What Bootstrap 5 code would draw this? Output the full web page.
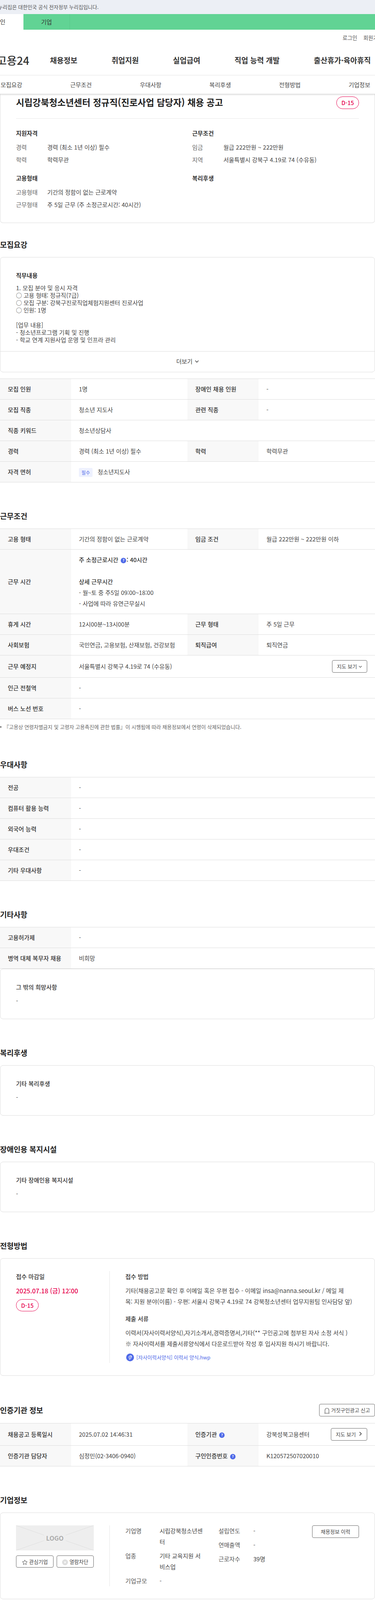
<!DOCTYPE html>
<html lang="ko">
<head>
  <meta charset="UTF-8" />
  <meta name="viewport" content="width=device-width, initial-scale=1.0"/>
  <title>고용24 | 채용 공고</title>
  <link href="https://cdn.jsdelivr.net/npm/bootstrap@5.3.0/dist/css/bootstrap.min.css" rel="stylesheet"/>
  <script src="https://cdn.jsdelivr.net/npm/bootstrap@5.3.0/dist/js/bootstrap.bundle.min.js"></script>
  <style>
    html, body { overflow-x: hidden; }
    body {
      font-family: "Noto Sans CJK KR", "Noto Sans", sans-serif;
      font-size: 15px;
      line-height: 28px;
      color: #444;
      background: #fff;
    }
    .gov-bar { height: 36px; background: #eceff5; font-size: 13px; line-height: 36px; color: #555; white-space: nowrap; }
    .gov-bar span { margin-left: -5px; display: inline-block; }
    .type-bar { height: 40px; background: #61d394; color: #333; line-height: 40px; }
    .type-on { width: 60px; background: #fff; }
    .type-off { width: 119px; text-align: center; border-right: 1px solid #58c788; }
    .util-row { height: 40px; font-size: 13.5px; line-height: 40px; color: #555; gap: 16px; margin-right: -20px; }
    .main-nav { height: 77px; border-bottom: 1px solid #e5e5e5; align-items: center; gap: 87.5px; white-space: nowrap; }
    .site-logo { font-size: 28px; font-weight: 500; color: #333; margin-left: -8.5px; margin-right: -34.5px; line-height: 76px; }
    .main-link { font-size: 19px; font-weight: 600; color: #333; }
    .sub-nav { position: relative; z-index: 2; height: 48px; line-height: 48px; background: #fff; border-bottom: 1px solid #ddd; box-shadow: 0 2px 3px rgba(0,0,0,.12); }
    .sub-inner { margin-left: -60px; width: 1069.2px; }
    .sub-inner > span { flex: 1 1 0; text-align: center; color: #444; }
    .box { border: 1px solid #ddd; border-radius: 8px; background: #fff; }
    .summary-box { border-top: 0; border-top-left-radius: 0; border-top-right-radius: 0; padding: 6px 40px 32px; }
    .job-title { font-size: 23px; font-weight: 600; color: #222; line-height: 28px; margin: 0; }
    .dday { display: inline-block; width: 58px; height: 32px; line-height: 30px; border: 1px solid #e6004d; border-radius: 16px; color: #e6004d; text-align: center; font-size: 14.5px; font-weight: 500; }
    .summary-head { padding-bottom: 24px; border-bottom: 1px solid #e8e8e8; margin-bottom: 23px; }
    .sum-left { width: 451px; }
    .sum-h { font-weight: 600; color: #333; margin-bottom: 8px; }
    .sum-row { display: flex; margin-bottom: 4px; }
    .sum-row b { width: 80px; flex: none; font-weight: 400; color: #666; }
    .sum-group { margin-bottom: 19px; }
    .sum-group:last-child { margin-bottom: -4px; }
    .sec { margin-top: 72px; }
    .sec-first { margin-top: 41px; }
    .sec-title { font-size: 19px; font-weight: 600; color: #222; line-height: 28px; margin: 0 0 18px; }
    .duty { padding: 32px 40px 20px; line-height: 19px; }
    .duty-h { line-height: 28px; font-weight: 600; color: #333; margin-bottom: 8px; }
    .duty-text { white-space: pre-line; }
    .more-row { height: 53px; line-height: 50px; border-top: 1px solid #ddd; text-align: center; color: #444; }
    .more-row svg { margin-left: 6px; vertical-align: 2px; }
    .tbl { table-layout: fixed; width: 100%; margin: 0; border-top: 1px solid #ddd; }
    .tbl td, .tbl th { padding: 12px 20px; line-height: 28px; border-bottom: 1px solid #ddd; color: #444; font-weight: 400; vertical-align: middle; }
    .tbl th { background: #f8f8f8; font-weight: 500; color: #333; }
    .col-h { width: 182px; }
    .col-v { width: 298px; }
    .gap-top { margin-top: 16px; }
    .chip { display: inline-block; width: 35px; height: 23px; line-height: 23px; text-align: center; font-size: 12px; background: #eef1fe; color: #5a74ec; border-radius: 3px; margin-right: 13px; vertical-align: middle; }
    .hint { display: inline-block; width: 14px; height: 14px; line-height: 14px; border-radius: 50%; background: #4f6ae8; color: #fff; font-size: 9px; font-weight: 700; text-align: center; vertical-align: 1px; margin: 0 1px 0 2px; }
    .fw-mid { font-weight: 500; color: #333; }
    .map-btn { height: 32px; padding: 0 12px; font-size: 13px; line-height: 30px; border: 1px solid #666; border-radius: 4px; background: #fff; color: #444; white-space: nowrap; }
    .map-btn svg { margin-left: 4px; vertical-align: 1px; }
    .note-line { font-size: 13px; color: #666; line-height: 20px; margin-top: 10px; white-space: nowrap; }
    .note-line::before { content: ""; display: inline-block; width: 4px; height: 4px; border-radius: 50%; background: #777; margin: 0 6px 2px 0; vertical-align: middle; }
    .plain-box { padding: 32px 40px; margin: 0; }
    .plain-box div:first-child { color: #333; margin-bottom: 7px; font-weight: 500; }
    .apply-box { padding: 32px 40px; display: flex; }
    .left-col { width: 240px; flex: none; border-right: 1px solid #e5e5e5; }
    .left-logo { padding-right: 40px; height: 156px; }
    .right-col { flex: 1; padding-left: 40px; min-width: 0; }
    .deadline { color: #e6004d; font-size: 16px; font-weight: 500; margin-bottom: 8px; }
    .dday-sm { height: 31px; line-height: 29px; display: block; }
    .file-line { color: #4f6ae8; margin-top: 7px; display: flex; align-items: center; gap: 6px; font-size: 13px; padding-left: 2px; }
    .report-btn { width: 143px; height: 32px; padding: 0; font-size: 13px; line-height: 30px; border: 1px solid #666; border-radius: 4px; background: #fff; color: #444; }
    .report-head { margin-bottom: 17px; }
    .logo-ph { position: relative; height: 64px; background: #eee; text-align: center; line-height: 64px; font-weight: 600; font-size: 16px; color: #aaa; }
    .logo-ph svg { position: absolute; left: 0; top: 0; width: 100%; height: 100%; }
    .logo-ph span { position: relative; }
    .logo-btns { margin-top: 13px; width: 199px; }
    .small-btn { height: 31px; font-size: 13px; line-height: 29px; padding: 0; border: 1px solid #666; border-radius: 4px; background: #fff; color: #444; white-space: nowrap; }
    .btn-w96 { width: 96px; }
    .btn-w95 { width: 95px; }
    .comp-grid { display: flex; }
    .comp-a { width: 238.5px; flex: none; }
    .comp-b { width: 239px; flex: none; }
    .kv { display: flex; margin-bottom: 8px; }
    .kv b { font-weight: 400; color: #555; flex: none; }
    .comp-a .kv b { width: 87.5px; }
    .comp-a .kv span { width: 115px; word-break: break-all; }
    .comp-b .kv b { width: 89px; }
    .hist-btn { width: 120px; height: 32px; line-height: 30px; padding: 0; border: 1px solid #666; border-radius: 4px; background: #fff; color: #444; font-size: 13px; }
  </style>
</head>
<body>

  <div class="gov-bar"><span>누리집은 대한민국 공식 전자정부 누리집입니다.</span></div>
  <div class="type-bar d-flex">
    <div class="type-on">인</div>
    <div class="type-off">기업</div>
  </div>
  <div class="util-row d-flex justify-content-end">
    <span>로그인</span>
    <span>회원가입</span>
  </div>
  <div class="main-nav d-flex">
    <span class="site-logo">고용24</span>
    <span class="main-link">채용정보</span>
    <span class="main-link">취업지원</span>
    <span class="main-link">실업급여</span>
    <span class="main-link">직업 능력 개발</span>
    <span class="main-link">출산휴가·육아휴직</span>
  </div>
  <div class="sub-nav overflow-hidden">
    <div class="sub-inner d-flex">
      <span>모집요강</span><span>근무조건</span><span>우대사항</span><span>복리후생</span><span>전형방법</span><span>기업정보</span>
    </div>
  </div>

  <!-- 공고 요약 -->
  <div class="box summary-box">
    <div class="summary-head d-flex justify-content-between align-items-start">
      <h1 class="job-title">시립강북청소년센터 정규직(진로사업 담당자) 채용 공고</h1>
      <span class="dday">D-15</span>
    </div>
    <div class="d-flex">
      <div class="sum-left">
        <div class="sum-group">
          <div class="sum-h">지원자격</div>
          <div class="sum-row"><b>경력</b><span>경력 (최소 1년 이상) 필수</span></div>
          <div class="sum-row"><b>학력</b><span>학력무관</span></div>
        </div>
        <div class="sum-group">
          <div class="sum-h">고용형태</div>
          <div class="sum-row"><b>고용형태</b><span>기간의 정함이 없는 근로계약</span></div>
          <div class="sum-row"><b>근무형태</b><span>주 5일 근무 (주 소정근로시간: 40시간)</span></div>
        </div>
      </div>
      <div>
        <div class="sum-group">
          <div class="sum-h">근무조건</div>
          <div class="sum-row"><b>임금</b><span>월급 222만원 ~ 222만원</span></div>
          <div class="sum-row"><b>지역</b><span>서울특별시 강북구 4.19로 74 (수유동)</span></div>
        </div>
        <div class="sum-group">
          <div class="sum-h">복리후생</div>
        </div>
      </div>
    </div>
  </div>

  <!-- 모집요강 -->
  <div class="sec-first sec">
    <h2 class="sec-title">모집요강</h2>
    <div class="box">
      <div class="duty">
        <div class="duty-h">직무내용</div>
        <div class="duty-text">1. 모집 분야 및 응시 자격
○ 고용 형태: 정규직(7급)
○ 모집 구분: 강북구진로직업체험지원센터 진로사업
○ 인원: 1명

[업무 내용]
- 청소년프로그램 기획 및 진행
- 학교 연계 지원사업 운영 및 인프라 관리</div>
      </div>
      <div class="more-row">더보기<svg width="10" height="7" viewBox="0 0 10 7"><path d="M1 1l4 4.5L9 1" fill="none" stroke="#333" stroke-width="1.4"/></svg></div>
    </div>
    <table class="tbl gap-top">
      <colgroup><col class="col-h"><col class="col-v"><col class="col-h"><col></colgroup>
      <tr><th>모집 인원</th><td>1명</td><th>장애인 채용 인원</th><td>-</td></tr>
      <tr><th>모집 직종</th><td>청소년 지도사</td><th>관련 직종</th><td>-</td></tr>
      <tr><th>직종 키워드</th><td colspan="3">청소년상담사</td></tr>
      <tr><th>경력</th><td>경력 (최소 1년 이상) 필수</td><th>학력</th><td>학력무관</td></tr>
      <tr><th>자격 면허</th><td colspan="3"><span class="chip">필수</span>청소년지도사</td></tr>
    </table>
  </div>

  <!-- 근무조건 -->
  <div class="sec">
    <h2 class="sec-title">근무조건</h2>
    <table class="tbl">
      <colgroup><col class="col-h"><col class="col-v"><col class="col-h"><col></colgroup>
      <tr><th>고용 형태</th><td>기간의 정함이 없는 근로계약</td><th>임금 조건</th><td>월급 222만원 ~ 222만원 이하</td></tr>
      <tr><th>근무 시간</th><td colspan="3">
        <div class="fw-mid">주 소정근로시간 <span class="hint">?</span>: 40시간</div>
        <div>&nbsp;</div>
        <div class="fw-mid">상세 근무시간</div>
        <div>- 월~토 중 주5일 09:00~18:00</div>
        <div>- 사업에 따라 유연근무실시</div>
      </td></tr>
      <tr><th>휴게 시간</th><td>12시00분~13시00분</td><th>근무 형태</th><td>주 5일 근무</td></tr>
      <tr><th>사회보험</th><td>국민연금, 고용보험, 산재보험, 건강보험</td><th>퇴직급여</th><td>퇴직연금</td></tr>
      <tr><th>근무 예정지</th><td colspan="3">
        <div class="d-flex justify-content-between align-items-center">
          <span>서울특별시 강북구 4.19로 74 (수유동)</span>
          <button type="button" class="map-btn">지도 보기<svg width="9" height="6" viewBox="0 0 9 6"><path d="M1 1l3.5 3.5L8 1" fill="none" stroke="#444" stroke-width="1.1"/></svg></button>
        </div>
      </td></tr>
      <tr><th>인근 전철역</th><td colspan="3">-</td></tr>
      <tr><th>버스 노선 번호</th><td colspan="3">-</td></tr>
    </table>
    <div class="note-line">『고용상 연령차별금지 및 고령자 고용촉진에 관한 법률』이 시행됨에 따라 채용정보에서 연령이 삭제되었습니다.</div>
  </div>

  <!-- 우대사항 -->
  <div class="sec">
    <h2 class="sec-title">우대사항</h2>
    <table class="tbl">
      <colgroup><col class="col-h"><col></colgroup>
      <tr><th>전공</th><td>-</td></tr>
      <tr><th>컴퓨터 활용 능력</th><td>-</td></tr>
      <tr><th>외국어 능력</th><td>-</td></tr>
      <tr><th>우대조건</th><td>-</td></tr>
      <tr><th>기타 우대사항</th><td>-</td></tr>
    </table>
  </div>

  <!-- 기타사항 -->
  <div class="sec">
    <h2 class="sec-title">기타사항</h2>
    <table class="tbl">
      <colgroup><col class="col-h"><col></colgroup>
      <tr><th>고용허가제</th><td>-</td></tr>
      <tr><th>병역 대체 복무자 채용</th><td>비희망</td></tr>
    </table>
    <div class="box plain-box gap-top">
      <div>그 밖의 희망사항</div>
      <div>-</div>
    </div>
  </div>

  <div class="sec">
    <h2 class="sec-title">복리후생</h2>
    <div class="box plain-box">
      <div>기타 복리후생</div>
      <div>-</div>
    </div>
  </div>

  <div class="sec">
    <h2 class="sec-title">장애인용 복지시설</h2>
    <div class="box plain-box">
      <div>기타 장애인용 복지시설</div>
      <div>-</div>
    </div>
  </div>

  <!-- 전형방법 -->
  <div class="sec">
    <h2 class="sec-title">전형방법</h2>
    <div class="box apply-box">
      <div class="left-col">
        <div class="fw-mid mb-2">접수 마감일</div>
        <div class="deadline">2025.07.18 (금) 12:00</div>
        <span class="dday dday-sm">D-15</span>
      </div>
      <div class="right-col">
        <div class="fw-mid mb-2">접수 방법</div>
        <div>기타(채용공고문 확인 후 이메일 혹은 우편 접수 - 이메일 insa@nanna.seoul.kr / 메일 제<br>목: 지원 분야(이름) - 우편: 서울시 강북구 4.19로 74 강북청소년센터 업무지원팀 인사담당 앞)</div>
        <div class="fw-mid mt-3 mb-2">제출 서류</div>
        <div>이력서(자사이력서양식),자기소개서,경력증명서,기타(** 구인공고에 첨부된 자사 소정 서식 )</div>
        <div>※ 자사이력서를 제출서류양식에서 다운로드받아 작성 후 입사지원 하시기 바랍니다.</div>
        <div class="file-line">
          <svg width="20" height="20" viewBox="0 0 20 20"><circle cx="10" cy="10" r="10" fill="#4f6ae8"/><path d="M12.6 6.6l-4.8 6a1.5 1.5 0 0 0 2.3 1.8l3.6-4.6a3 3 0 0 0-4.6-3.7L5.9 10" fill="none" stroke="#fff" stroke-width="1.2" stroke-linecap="round"/></svg>
          <span>[자사이력서양식] 이력서 양식.hwp</span>
        </div>
      </div>
    </div>
  </div>

  <!-- 인증기관 정보 -->
  <div class="sec">
    <div class="report-head d-flex justify-content-between align-items-center">
      <h2 class="sec-title mb-0">인증기관 정보</h2>
      <button type="button" class="report-btn"><svg width="14" height="16" viewBox="0 0 14 16" class="me-1"><path d="M2 15V7a5 5 0 0 1 10 0v8zM.5 15h13" fill="none" stroke="#444" stroke-width="1.1"/></svg>거짓구인광고 신고</button>
    </div>
    <table class="tbl">
      <colgroup><col class="col-h"><col class="col-v"><col class="col-h"><col></colgroup>
      <tr><th>채용공고 등록일시</th><td>2025.07.02 14:46:31</td><th>인증기관 <span class="hint">?</span></th><td>
        <div class="d-flex justify-content-between align-items-center">
          <span>강북성북고용센터</span>
          <button type="button" class="map-btn">지도 보기<svg width="8" height="11" viewBox="0 0 8 11" class="ms-2"><path d="M1.5 1l4.5 4.5L1.5 10" fill="none" stroke="#333" stroke-width="1.6"/></svg></button>
        </div>
      </td></tr>
      <tr><th>인증기관 담당자</th><td>심정민(02-3406-0940)</td><th>구인인증번호 <span class="hint">?</span></th><td>K120572507020010</td></tr>
    </table>
  </div>

  <!-- 기업정보 -->
  <div class="sec">
    <h2 class="sec-title">기업정보</h2>
    <div class="box apply-box">
      <div class="left-col left-logo">
        <div class="logo-ph">
          <svg viewBox="0 0 199 64" preserveAspectRatio="none"><path d="M0 0l72 25M199 0l-72 25M0 64l72-25M199 64l-72-25" stroke="#ddd" stroke-width="1"/></svg>
          <span>LOGO</span>
        </div>
        <div class="logo-btns d-flex justify-content-between">
          <button type="button" class="small-btn btn-w96"><svg width="15" height="15" viewBox="0 0 24 24" class="me-1"><path d="M12 2.5l2.9 6.4 7 .8-5.2 4.7 1.4 6.9-6.1-3.5-6.1 3.5 1.4-6.9-5.2-4.7 7-.8z" fill="none" stroke="#444" stroke-width="1.6"/></svg>관심기업</button>
          <button type="button" class="small-btn btn-w95"><svg width="15" height="15" viewBox="0 0 15 15" class="me-1"><circle cx="7.5" cy="7.5" r="7.5" fill="#ddd"/><path d="M5 5l5 5M10 5l-5 5" stroke="#fff" stroke-width="1.2"/></svg>열람차단</button>
        </div>
      </div>
      <div class="right-col d-flex justify-content-between">
        <div class="comp-grid">
          <div class="comp-a">
            <div class="kv"><b>기업명</b><span>시립강북청소년센터</span></div>
            <div class="kv"><b>업종</b><span>기타 교육지원 서비스업</span></div>
            <div class="kv mb-0"><b>기업규모</b><span>-</span></div>
          </div>
          <div class="comp-b">
            <div class="kv"><b>설립연도</b><span>-</span></div>
            <div class="kv"><b>연매출액</b><span>-</span></div>
            <div class="kv"><b>근로자수</b><span>39명</span></div>
          </div>
        </div>
        <div><button type="button" class="hist-btn">채용정보 이력</button></div>
      </div>
    </div>
  </div>

</body>
</html>
